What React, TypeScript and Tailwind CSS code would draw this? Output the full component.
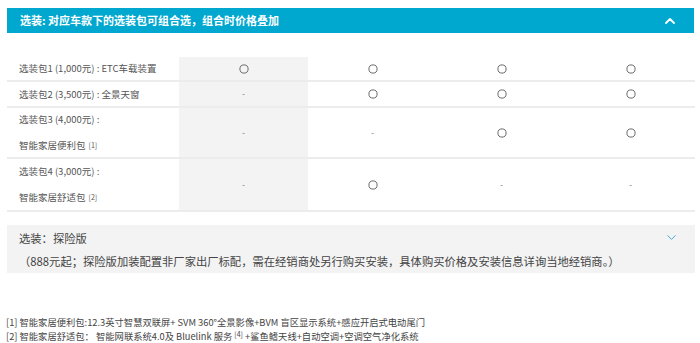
import { ChevronUp, ChevronDown } from "lucide-react"

type Mark = "o" | "-"

type Pack = {
  lines: string[]
  note?: string
  marks: Mark[]
  h: string
}

const packs: Pack[] = [
  { lines: ["选装包1 (1,000元) : ETC车载装置"], marks: ["o", "o", "o", "o"], h: "h-[25px]" },
  { lines: ["选装包2 (3,500元) : 全景天窗"], marks: ["-", "o", "o", "o"], h: "h-[26px]" },
  { lines: ["选装包3 (4,000元) :", "智能家居便利包"], note: "[1]", marks: ["-", "-", "o", "o"], h: "h-[51px]" },
  { lines: ["选装包4 (3,000元) :", "智能家居舒适包"], note: "[2]", marks: ["-", "o", "-", "-"], h: "h-[53px]" },
]

const font = { fontFamily: '"Noto Sans CJK SC", "Lato", sans-serif' }

function Cell({ mark }: { mark: Mark }) {
  if (mark === "o") {
    return (
      <svg width="10" height="10" viewBox="0 0 10 10">
        <circle cx="5" cy="5" r="4.1" fill="none" stroke="#6b6b6b" strokeWidth="1" />
      </svg>
    )
  }
  return <span className="text-[9px] text-[#888]">-</span>
}

export default function App() {
  return (
    <div className="w-[700px] h-[343px] bg-white text-[#555]" style={font}>
      {/* 选装标题栏 */}
      <div className="ml-[7px] mr-[6px] mt-[8px] h-[25px] bg-[#00a7cf] flex items-center justify-between pl-[13px] pr-[16px]">
        <span className="text-white text-[11px] font-bold">选装: 对应车款下的选装包可组合选，组合时价格叠加</span>
        <ChevronUp size={16} strokeWidth={2.75} className="text-white" />
      </div>

      {/* 选装包表格 */}
      <div className="ml-[7px] mt-[24px] grid grid-cols-[172px_repeat(4,129px)]">
        {packs.map((p, i) => (
          <div key={i} className="contents">
            <div className={`border-b-2 border-[#ececec] pl-[12px] text-[9.5px] flex flex-col justify-center gap-[13px] ${p.h}`}>
              {p.lines.map((l, j) => (
                <div key={j} className="leading-[13px]">
                  {l}
                  {j === p.lines.length - 1 && p.note && (
                    <sup className="text-[7px] ml-[3px] relative -top-[1px]">{p.note}</sup>
                  )}
                </div>
              ))}
            </div>
            {p.marks.map((m, k) => (
              <div
                key={k}
                className={`border-b-2 border-[#ececec] flex items-center justify-center ${
                  k === 0 ? "bg-[#f3f3f3]" : ""
                } ${p.h}`}
              >
                <Cell mark={m} />
              </div>
            ))}
          </div>
        ))}
      </div>

      {/* 探险版 */}
      <div className="ml-[7px] mr-[5px] mt-[13px] h-[48px] bg-[#f3f3f3] pl-[12px] pr-[16px] flex flex-col justify-center gap-[9px] text-[11.3px] text-[#444]">
        <div className="flex items-center justify-between leading-[14px]">
          <span>选装：探险版</span>
          <ChevronDown size={15} strokeWidth={1.5} className="text-[#3aa6d4]" />
        </div>
        <div className="leading-[14px]">
          （888元起；探险版加装配置非厂家出厂标配，需在经销商处另行购买安装，具体购买价格及安装信息详询当地经销商。）
        </div>
      </div>

      {/* 注释 */}
      <div className="ml-[6px] mt-[42px] text-[9.3px] text-[#444] leading-[14px]">
        <div>[1] 智能家居便利包:12.3英寸智慧双联屏+ SVM 360°全景影像+BVM 盲区显示系统+感应开启式电动尾门</div>
        <div>
          [2] 智能家居舒适包： 智能网联系统4.0及 Bluelink 服务 <sup className="text-[7px]">[4]</sup> +鲨鱼鳍天线+自动空调+空调空气净化系统
        </div>
      </div>
    </div>
  )
}
